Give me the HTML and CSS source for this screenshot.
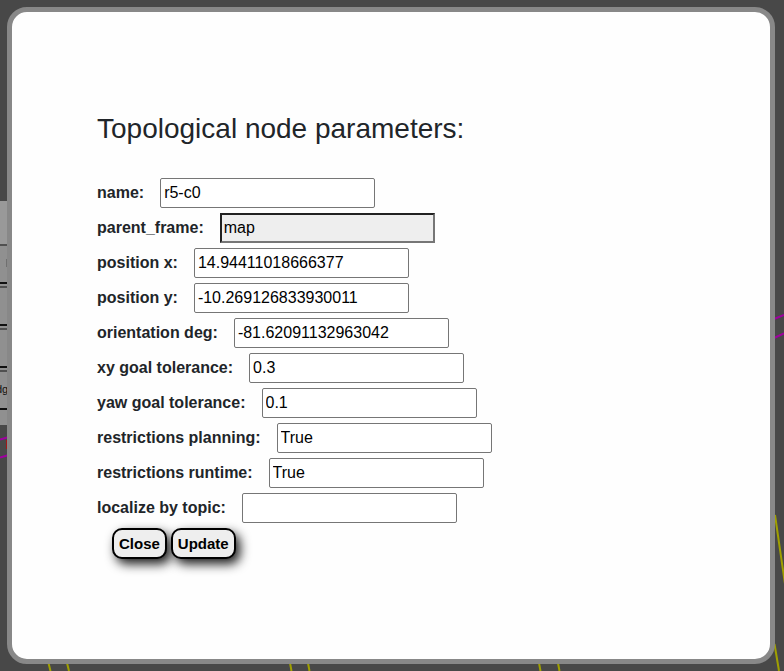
FILE: index.html
```html
<!DOCTYPE html>
<html lang="en">
<head>
<meta charset="utf-8">
<title>Topological node parameters</title>
<link rel="stylesheet" href="styles.css">
</head>
<body>
<svg class="map" width="784" height="671" viewBox="0 0 784 671" aria-hidden="true">
  <g fill="none" stroke="#a000a0" stroke-width="2">
    <path d="M0 439.500 L9 437M0 457.500 L9 455M774 319 L784 315M774 338 L784 333.500"/>
  </g>
  <g fill="none" stroke="#a0a000" stroke-width="2">
    <path d="M48.500 663 L50.500 671M67 663 L69 671M290 663 L291.500 671M308 663 L309.500 671M539 663 L540.500 671M558 663 L559.500 671M775 515 L785 584M774.500 644 L779 671"/>
  </g>
  <path d="M6.500 440V449" stroke="#a01818"/>
</svg>
<aside class="toolbar">
  <div class="tool tool-first"></div>
  <div class="tool"><span class="tick"></span></div>
  <div class="tool"></div>
  <div class="tool"></div>
  <div class="tool"><span class="tool-label">dg</span></div>
</aside>
<main class="modal">
  <h1>Topological node parameters:</h1>
  <form>
    <div class="row"><label for="name">name:</label><input id="name" value="r5-c0"></div>
    <div class="row"><label for="frame">parent_frame:</label><input id="frame" class="locked" value="map" readonly></div>
    <div class="row"><label for="px">position x:</label><input id="px" value="14.94411018666377"></div>
    <div class="row"><label for="py">position y:</label><input id="py" value="-10.269126833930011"></div>
    <div class="row"><label for="deg">orientation deg:</label><input id="deg" value="-81.62091132963042"></div>
    <div class="row"><label for="xy">xy goal tolerance:</label><input id="xy" value="0.3"></div>
    <div class="row"><label for="yaw">yaw goal tolerance:</label><input id="yaw" value="0.1"></div>
    <div class="row"><label for="plan">restrictions planning:</label><input id="plan" value="True"></div>
    <div class="row"><label for="run">restrictions runtime:</label><input id="run" value="True"></div>
    <div class="row"><label for="topic">localize by topic:</label><input id="topic"></div>
    <div class="actions"><button type="button">Close</button><button type="button">Update</button></div>
  </form>
</main>
</body>
</html>
```
FILE: styles.css
```css
* { box-sizing: border-box; }

body {
  margin: 0;
  height: 671px;
  padding: 7px 9px 7px 7px;
  overflow: hidden;
  background: #484848;
  color: #212529;
  font: 16px/24px "Liberation Sans", Arial, sans-serif;
}

.map { position: absolute; inset: 0; }

.toolbar {
  position: absolute;
  left: 0;
  top: 201px;
  width: 8px;
  height: 224px;
  overflow: hidden;
  background: #909090;
}

.tool {
  height: 40px;
  margin-bottom: 2px;
  border-top: 2px solid #505050;
  border-bottom: 2px solid #101010;
}

.tool-first { height: 43px; margin: 0; border: 0; background: #999; }
.tick { display: block; width: 1px; height: 8px; margin: 13px 0 0 6px; background: #707070; }

.tool-label {
  display: block;
  margin: 11px 0 0 -4px;
  color: #111;
  font-size: 11px;
  line-height: 13px;
}

.modal {
  position: relative;
  height: 657px;
  padding: 100px 85px;
  border: 5px solid #888;
  border-radius: 20px;
  background: #fefefe;
}

h1 {
  margin: 0 0 32px;
  font-size: 28px;
  font-weight: 400;
  line-height: 34px;
}

.row {
  display: flex;
  align-items: center;
  gap: 16px;
  height: 30px;
  margin-bottom: 5px;
}

label { font-weight: 700; white-space: nowrap; }

input {
  width: 215px;
  height: 30px;
  padding: 1px 3px;
  border: 1px solid #767676;
  border-radius: 2px;
  outline: 0;
  background: #fff;
  color: #000;
  font: inherit;
}

.locked {
  padding: 1px 2px;
  border: 2px inset #767676;
  border-radius: 0;
  background: #eee;
}

.actions { display: flex; gap: 4px; padding-left: 15px; }

button {
  height: 31px;
  padding: 1px 5px;
  border: 2px solid #000;
  border-radius: 10px;
  background: #eee;
  box-shadow: 4px 5px 11px rgba(0, 0, 0, .9);
  color: #000;
  font: 700 15px "Liberation Sans", Arial, sans-serif;
}
```
